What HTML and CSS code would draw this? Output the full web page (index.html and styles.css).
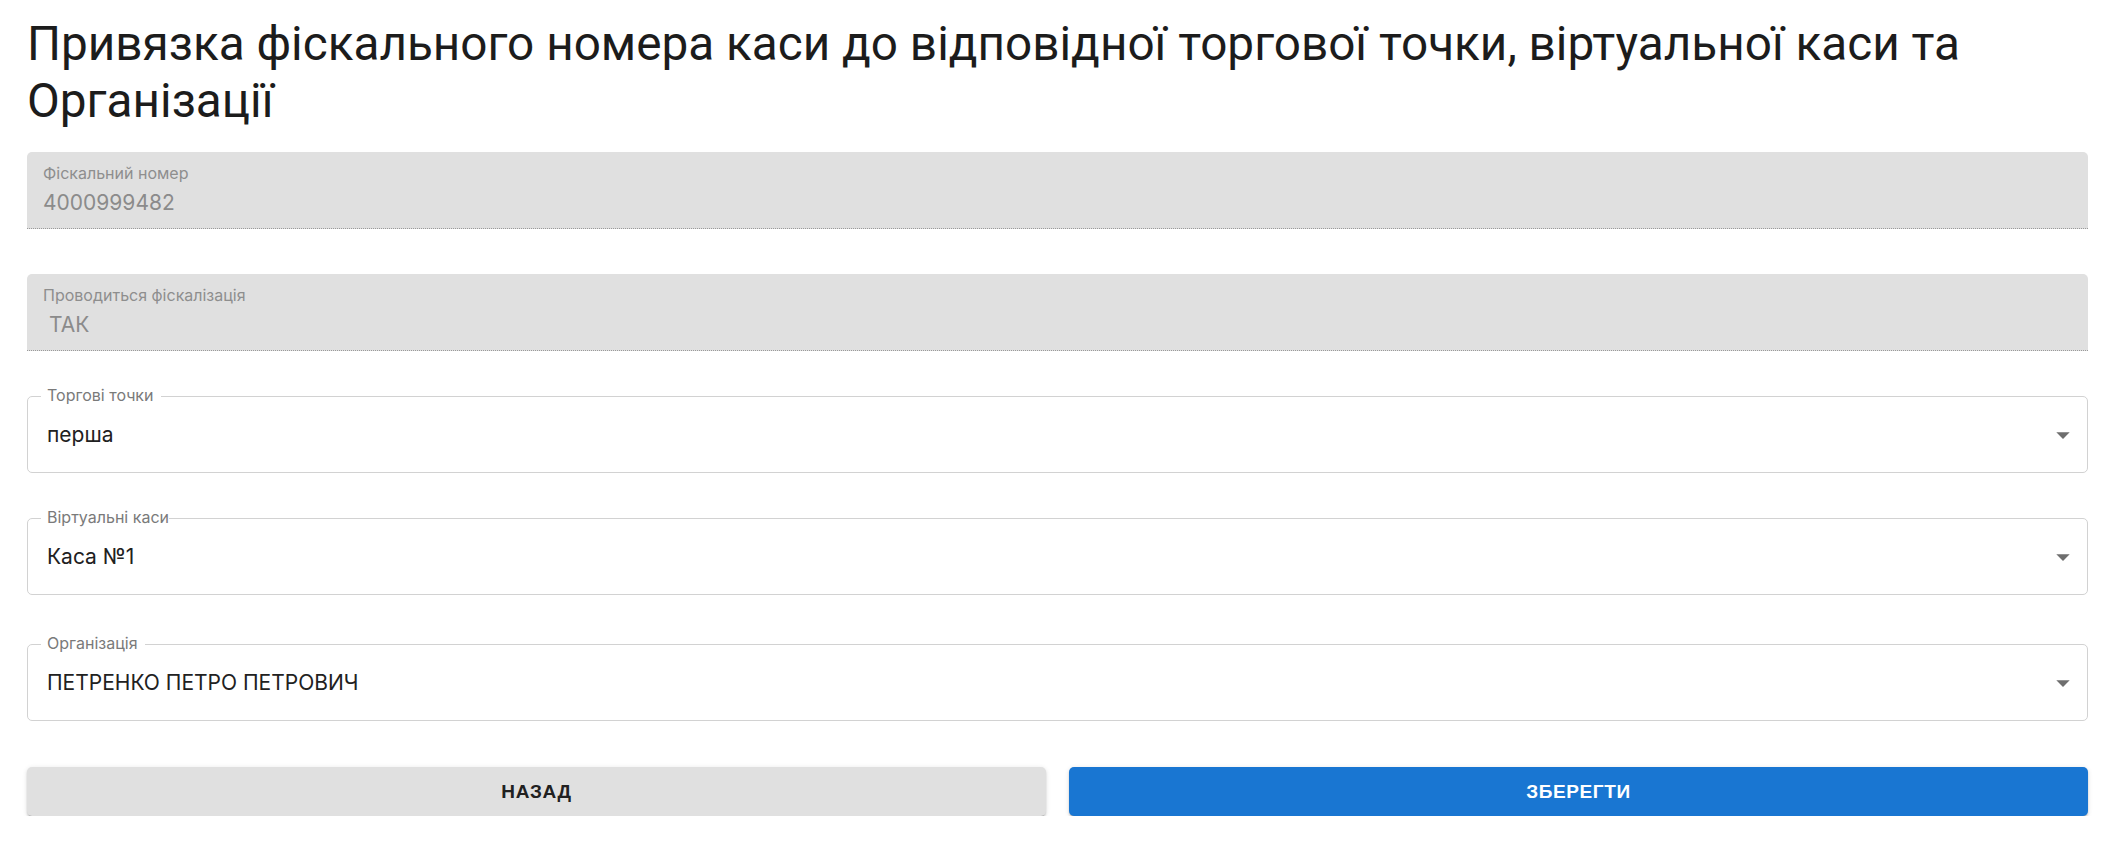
FILE: index.html
```html
<!DOCTYPE html>
<html lang="uk">
<head>
<meta charset="utf-8">
<title>Привязка фіскального номера</title>
<link rel="stylesheet" href="styles.css">
</head>
<body>
<main class="page">
  <h1 class="title">Привязка фіскального номера каси до відповідної торгової точки, віртуальної каси та Організації</h1>
  <form class="form">
    <div class="filled">
      <span class="filled-label">Фіскальний номер</span>
      <span class="filled-value">4000999482</span>
    </div>
    <div class="filled">
      <span class="filled-label">Проводиться фіскалізація</span>
      <span class="filled-value">&nbsp;ТАК</span>
    </div>
    <div class="outlined">
      <span class="outlined-label">Торгові точки</span>
      <span class="outlined-value">перша</span>
      <svg class="arrow" viewBox="0 0 24 24" width="32" height="32"><path d="M7 10l5 5 5-5z"/></svg>
    </div>
    <div class="outlined">
      <span class="outlined-label tight">Віртуальні каси</span>
      <span class="outlined-value">Каса №1</span>
      <svg class="arrow" viewBox="0 0 24 24" width="32" height="32"><path d="M7 10l5 5 5-5z"/></svg>
    </div>
    <div class="outlined org">
      <span class="outlined-label">Організація</span>
      <span class="outlined-value">ПЕТРЕНКО ПЕТРО ПЕТРОВИЧ</span>
      <svg class="arrow" viewBox="0 0 24 24" width="32" height="32"><path d="M7 10l5 5 5-5z"/></svg>
    </div>
    <div class="actions">
      <button type="button" class="btn btn-back">Назад</button>
      <button type="button" class="btn btn-save">Зберегти</button>
    </div>
  </form>
</main>
</body>
</html>
```
FILE: styles.css
```css
html, body {
  margin: 0;
  padding: 0;
  background: #ffffff;
}

.page {
  padding: 16px 32px 0 27px;
  font-family: Inter, "Liberation Sans", Arial, sans-serif;
  color: #212121;
}

.title {
  margin: 0 0 22px;
  font-family: Roboto, "Liberation Sans", sans-serif;
  font-weight: 400;
  font-size: 47.7px;
  line-height: 57px;
  color: #1c1c1c;
}

.form {
  display: flex;
  flex-direction: column;
  gap: 45px;
}

.filled {
  display: flex;
  flex-direction: column;
  gap: 7px;
  height: 77px;
  box-sizing: border-box;
  padding: 12px 16px 12px 16px;
  background: #e0e0e0;
  border-radius: 5px 5px 0 0;
  border-bottom: 1px dotted #9a9a9a;
}

.filled-label {
  font-size: 16px;
  line-height: 19px;
  color: #8e8e8e;
}

.filled-value {
  font-size: 21px;
  line-height: 26px;
  color: #8b8b8b;
}

.outlined {
  position: relative;
  display: flex;
  align-items: center;
  height: 77px;
  box-sizing: border-box;
  padding: 0 8px 0 19px;
  border: 1px solid #d2d2d2;
  border-radius: 5px;
}

.outlined.org {
  margin-top: 4px;
}

.outlined-label {
  position: absolute;
  left: 13px;
  top: -11px;
  padding: 0 7px 0 6px;
  background: #ffffff;
  font-size: 16px;
  line-height: 19px;
  color: #7a7a7a;
}

.outlined-label.tight {
  padding-right: 0;
}

.outlined-value {
  flex: 1;
  font-size: 21px;
  line-height: 26px;
  color: #212121;
}

.arrow {
  flex: none;
  fill: #6e6e6e;
}

.actions {
  display: flex;
  gap: 23px;
  margin-top: 1px;
}

.btn {
  flex: 1;
  height: 49px;
  border: none;
  border-radius: 5px;
  font-family: "Liberation Sans", Arial, sans-serif;
  font-weight: 700;
  font-size: 19px;
  letter-spacing: 0.6px;
  text-transform: uppercase;
  cursor: pointer;
  box-shadow: 0 3px 1px -2px rgba(0,0,0,0.2), 0 2px 2px 0 rgba(0,0,0,0.14), 0 1px 5px 0 rgba(0,0,0,0.12);
}

.btn-back {
  background: #e0e0e0;
  color: #212121;
}

.btn-save {
  background: #1976d2;
  color: #ffffff;
}
```
